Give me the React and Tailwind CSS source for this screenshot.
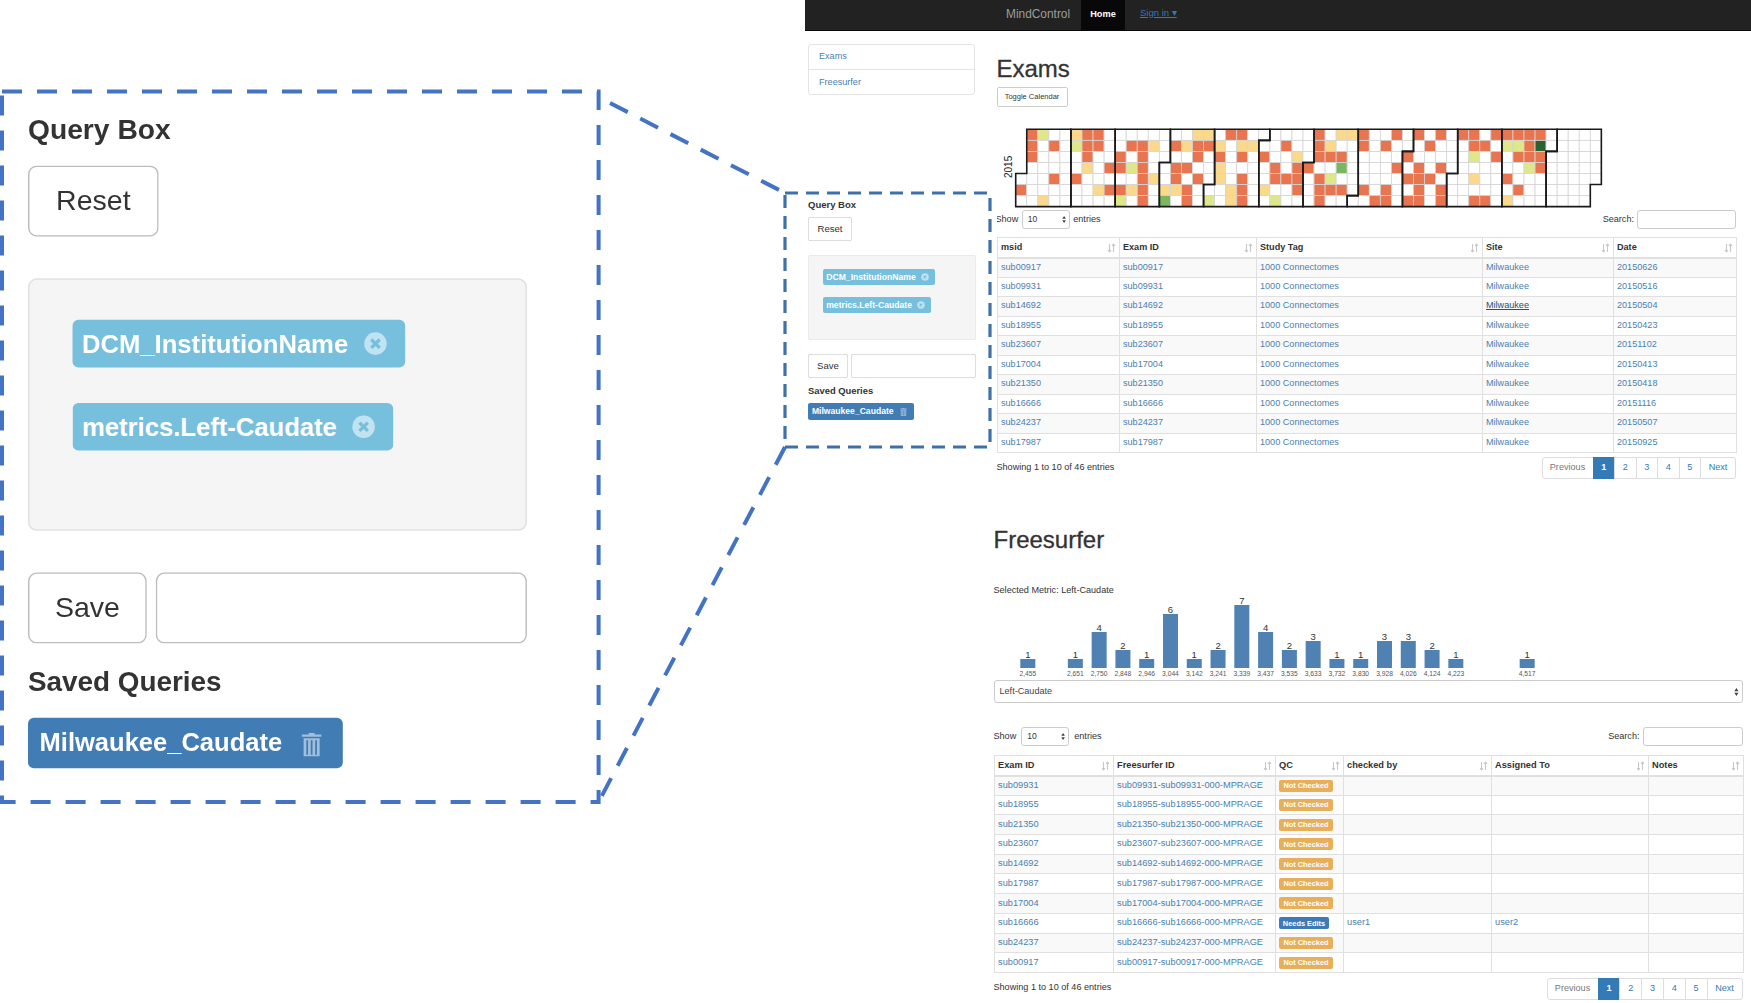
import React from 'react';

const FONT = "font-['Liberation_Sans',Arial,sans-serif]";

const examRows = [
  ['sub00917', '20150626'],
  ['sub09931', '20150516'],
  ['sub14692', '20150504'],
  ['sub18955', '20150423'],
  ['sub23607', '20151102'],
  ['sub17004', '20150413'],
  ['sub21350', '20150418'],
  ['sub16666', '20151116'],
  ['sub24237', '20150507'],
  ['sub17987', '20150925'],
];

const fsRows = ['sub09931', 'sub18955', 'sub21350', 'sub23607', 'sub14692', 'sub17987', 'sub17004', 'sub16666', 'sub24237', 'sub00917'];

// one string per week, one letter per weekday
const weeks = [
  '.....o.', 'ooo....', 'l.....y', '.o..o..', '.......', 'yl..o..', 'oooy...', 'oo...y.',
  '...o.o.', '..oo.ol', '.o.l.y.', '.oooooo', '.y..y..', '.....yg', '.o.ooy.', '.y.o.oo',
  'yoo.o..', 'yo....l', '.yoyy..', 'o....yy', 'oyo.ooo', '.y.....', '..o..y.', '...oo.l',
  '.o..o..', '..yooo.', '...o...', 'ooo.ooo', '.yo.lo.', 'y.og.o.', 'y......', 'oo...o.',
  '......o', '.o...oo', 'o..o...', '..o.o.o', 'o..oooo', '.o..o..', 'o..o.oo', '.......',
  'o......', 'ool.y.o', '.o....o', 'o.o....', 'ol..o.y', 'olo..o.', 'oool...', 'odoo...',
];

const cellColors = { o: '#e8754f', y: '#fbd98c', l: '#dfe78b', g: '#7bb661', d: '#2a6132' };

const bars = [
  [0, 1, '2,455'], [2, 1, '2,651'], [3, 4, '2,750'], [4, 2, '2,848'], [5, 1, '2,946'], [6, 6, '3,044'],
  [7, 1, '3,142'], [8, 2, '3,241'], [9, 7, '3,339'], [10, 4, '3,437'], [11, 2, '3,535'], [12, 3, '3,633'],
  [13, 1, '3,732'], [14, 1, '3,830'], [15, 3, '3,928'], [16, 3, '4,026'], [17, 2, '4,124'], [18, 1, '4,223'],
  [21, 1, '4,517'],
];

function SortIcon() {
  return (
    <svg width="9" height="10" viewBox="0 0 9 10" fill="none" stroke="#c8c8c8" strokeWidth="1.1" className="shrink-0">
      <path d="M2.5 1v8M1 7.2 2.5 9 4 7.2M6.5 9V1M5 2.8 6.5 1 8 2.8" />
    </svg>
  );
}

function UpDown({ size = 8 }) {
  return (
    <svg width={size * 0.6} height={size} viewBox="0 0 6 10" fill="#444" className="shrink-0">
      <path d="M3 0 5.6 4H.4zM3 10 .4 6h5.2z" />
    </svg>
  );
}

function CloseDot() {
  return (
    <svg width="8" height="8" viewBox="0 0 8 8" className="shrink-0">
      <circle cx="4" cy="4" r="3.8" fill="#fff" fillOpacity="0.55" />
      <path d="M2.6 2.6l2.8 2.8M5.4 2.6 2.6 5.4" stroke="#76bfdd" strokeWidth="1.1" />
    </svg>
  );
}

function TrashIcon() {
  return (
    <svg width="7" height="8" viewBox="0 0 7 8" fill="#fff" fillOpacity="0.5" className="shrink-0">
      <path d="M2.5 0h2v.6h2.3v.8H.2V.6h2.3z" />
      <path d="M.8 1.9h5.4V8H.8zM1.7 2.5v4.9h.6V2.5zM3.2 2.5v4.9h.6V2.5zM4.7 2.5v4.9h.6V2.5z" fillRule="evenodd" />
    </svg>
  );
}

function Chip({ label }) {
  return (
    <div className="flex h-[16px] w-fit items-center gap-[5px] rounded-[2px] bg-[#76bfdd] pl-[3.2px] pr-[6px] text-[8.65px] font-bold text-white">
      <span className="pt-[1px]">{label}</span>
      <CloseDot />
    </div>
  );
}

function QueryBox() {
  return (
    <div className="flex w-[168px] flex-col items-start text-[#333]">
      <div className="pt-[0.7px] text-[9.5px] font-bold leading-[12px]">Query Box</div>
      <button className="mt-[6px] h-[24px] w-[44px] rounded-[3px] bg-white pt-[0.7px] text-[9.6px] shadow-[inset_0_0_0_0.5px_#bdbdbd]">Reset</button>
      <div className="mt-[14.3px] flex h-[85.4px] w-[168px] flex-col gap-[12px] rounded-[3px] bg-[#f5f5f5] pl-[15px] pt-[14px] shadow-[inset_0_0_0_0.5px_#e0e0e0]">
        <Chip label="DCM_InstitutionName" />
        <Chip label="metrics.Left-Caudate" />
      </div>
      <div className="mt-[14px] flex w-[168px] gap-[3px]">
        <button className="h-[24px] w-[40px] rounded-[3px] bg-white text-[9.6px] shadow-[inset_0_0_0_0.5px_#bdbdbd]">Save</button>
        <div className="h-[24px] w-[125px] rounded-[3px] bg-white shadow-[inset_0_0_0_0.5px_#bdbdbd]" />
      </div>
      <div className="mt-[7px] text-[9.4px] font-bold leading-[12px]">Saved Queries</div>
      <div className="ml-[0.4px] mt-[6px] flex h-[17px] w-[106px] items-center gap-[6.5px] rounded-[2px] bg-[#427cb5] pl-[3.5px] text-[8.6px] font-bold text-white">
        <span>Milwaukee_Caudate</span>
        <TrashIcon />
      </div>
    </div>
  );
}

function Calendar() {
  const s = 11.05;
  const x0 = 18.7;
  const y0 = 1.3;
  const firstDow = new Date(2015, 0, 1).getDay();
  const cells = [];
  for (let i = 0; i < 365; i++) {
    const index = i + firstDow;
    const c = Math.floor(index / 7);
    const r = index % 7;
    const kind = weeks[c] ? weeks[c][r] : '.';
    cells.push(
      <rect key={i} x={x0 + c * s} y={y0 + r * s} width={s} height={s} fill={cellColors[kind] || '#fff'} stroke="#d4d4d4" strokeWidth="0.8" />
    );
  }
  const months = [];
  for (let m = 0; m < 12; m++) {
    const start = new Date(2015, m, 1);
    const end = new Date(2015, m + 1, 0);
    const dayOfYear = (d) => Math.round((d - new Date(2015, 0, 1)) / 86400000);
    const d0 = start.getDay();
    const w0 = Math.floor((dayOfYear(start) + firstDow) / 7);
    const d1 = end.getDay();
    const w1 = Math.floor((dayOfYear(end) + firstDow) / 7);
    months.push(
      <path
        key={m}
        d={`M${(w0 + 1) * s},${d0 * s}H${w0 * s}V${7 * s}H${w1 * s}V${(d1 + 1) * s}H${(w1 + 1) * s}V0H${(w0 + 1) * s}Z`}
        transform={`translate(${x0} ${y0})`}
        fill="none"
        stroke="#1a1a1a"
        strokeWidth="1.6"
      />
    );
  }
  return (
    <svg width="610" height="80" className="mt-[21px] block">
      {cells}
      {months}
      <text transform="translate(15 50) rotate(-90)" fontSize="10" fill="#222" fontFamily="Liberation Sans">2015</text>
    </svg>
  );
}

function Histogram() {
  const x0 = 33.8;
  const dx = 23.78;
  const base = 72;
  return (
    <svg width="749" height="84" className="block">
      {bars.map(([i, n, label]) => {
        const cx = x0 + i * dx;
        const h = n * 9;
        return (
          <g key={label}>
            <rect x={cx - 7.5} y={base - h} width="15" height={h} fill="#4f81b3" />
            <text x={cx} y={base - h - 1.5} textAnchor="middle" fontSize="9.5" fill="#333" fontFamily="Liberation Sans">{n}</text>
            <text x={cx} y={base + 8} textAnchor="middle" fontSize="6.7" fill="#555" fontFamily="Liberation Sans">{label}</text>
          </g>
        );
      })}
    </svg>
  );
}

function TableControls({ selectClass, searchClass, showClass }) {
  return (
    <div className="flex items-center justify-between text-[9.1px] text-[#333]">
      <div className={`flex items-center ${showClass}`}>
        <span>Show</span>
        <div className={`flex h-[19px] items-center justify-between rounded-[3px] border border-[#ccc] bg-white pl-[5px] pr-[3px] text-[8.5px] ${selectClass}`}>
          <span>10</span>
          <UpDown size={7} />
        </div>
        <span>entries</span>
      </div>
      <div className="flex items-center gap-[3px]">
        <span>Search:</span>
        <div className={`h-[19px] rounded-[3px] border border-[#ccc] bg-white ${searchClass}`} />
      </div>
    </div>
  );
}

function Pagination({ cellClass }) {
  const pages = ['1', '2', '3', '4', '5'];
  return (
    <div className="flex h-[22px] rounded-[3px] text-[9.1px] text-[#337ab7]">
      <div className="flex w-[52px] items-center justify-center rounded-l-[3px] border border-[#ddd] bg-white text-[#777]">Previous</div>
      {pages.map((p) => (
        <div
          key={p}
          className={`-ml-px flex items-center justify-center border ${cellClass} ${p === '1' ? 'border-[#337ab7] bg-[#337ab7] font-bold text-white' : 'border-[#ddd] bg-white'}`}
        >
          {p}
        </div>
      ))}
      <div className="-ml-px flex w-[36px] items-center justify-center rounded-r-[3px] border border-[#ddd] bg-white">Next</div>
    </div>
  );
}

function Th({ label, width }) {
  return (
    <th className={`h-[20px] border border-b-2 border-[#e0e0e0] bg-white p-0 text-left font-bold text-[#333] ${width}`}>
      <div className="flex items-center justify-between pl-[3.5px] pr-[3px] pt-[1px]">
        <span>{label}</span>
        <SortIcon />
      </div>
    </th>
  );
}

function ExamsTable() {
  return (
    <table className="mt-[8px] w-[739px] table-fixed border-collapse text-[9.1px]">
      <thead>
        <tr>
          <Th label="msid" width="w-[122px]" />
          <Th label="Exam ID" width="w-[137px]" />
          <Th label="Study Tag" width="w-[226px]" />
          <Th label="Site" width="w-[131px]" />
          <Th label="Date" width="w-[123px]" />
        </tr>
      </thead>
      <tbody>
        {examRows.map(([id, date], i) => (
          <tr key={id} className={`h-[19.5px] text-[#4b7fb0] ${i % 2 === 0 ? 'bg-[#f9f9f9]' : 'bg-white'}`}>
            <td className="border border-[#e0e0e0] p-0 pl-[3.5px]">{id}</td>
            <td className="border border-[#e0e0e0] p-0 pl-[3.5px]">{id}</td>
            <td className="border border-[#e0e0e0] p-0 pl-[3.5px]">1000 Connectomes</td>
            <td className={`border border-[#e0e0e0] p-0 pl-[3.5px] ${i === 2 ? 'text-[#23527c] underline' : ''}`}>Milwaukee</td>
            <td className="border border-[#e0e0e0] p-0 pl-[3.5px]">{date}</td>
          </tr>
        ))}
      </tbody>
    </table>
  );
}

function FreesurferTable() {
  return (
    <table className="mt-[9px] w-[749px] table-fixed border-collapse text-[9.25px]">
      <thead>
        <tr>
          <Th label="Exam ID" width="w-[119px]" />
          <Th label="Freesurfer ID" width="w-[162px]" />
          <Th label="QC" width="w-[68px]" />
          <Th label="checked by" width="w-[148px]" />
          <Th label="Assigned To" width="w-[157px]" />
          <Th label="Notes" width="w-[95px]" />
        </tr>
      </thead>
      <tbody>
        {fsRows.map((id, i) => {
          const edits = id === 'sub16666';
          return (
            <tr key={id} className={`h-[19.7px] text-[#4b7fb0] ${i % 2 === 0 ? 'bg-[#f9f9f9]' : 'bg-white'}`}>
              <td className="border border-[#e0e0e0] p-0 pl-[3.5px]">{id}</td>
              <td className="border border-[#e0e0e0] p-0 pl-[3.5px]">{`${id}-${id}-000-MPRAGE`}</td>
              <td className="border border-[#e0e0e0] p-0 pl-[3.5px]">
                <span className={`flex h-[12px] items-center justify-center rounded-[2px] text-[7.4px] font-bold text-white ${edits ? 'w-[50px] bg-[#3c7ab8]' : 'w-[54px] bg-[#e8ae5a]'}`}>
                  {edits ? 'Needs Edits' : 'Not Checked'}
                </span>
              </td>
              <td className="border border-[#e0e0e0] p-0 pl-[3.5px]">{edits ? 'user1' : ''}</td>
              <td className="border border-[#e0e0e0] p-0 pl-[3.5px]">{edits ? 'user2' : ''}</td>
              <td className="border border-[#e0e0e0] p-0" />
            </tr>
          );
        })}
      </tbody>
    </table>
  );
}

export default function App() {
  return (
    <div className={`relative h-[1003px] w-[1751px] overflow-hidden bg-white ${FONT}`}>
      <div className="ml-[805px] flex w-[946px] flex-col">
        <nav className="flex h-[31px] items-stretch border-b border-[#080808] bg-[#222] pl-[201px]">
          <div className="flex w-[75px] items-center text-[11.9px] text-[#9d9d9d]">MindControl</div>
          <div className="flex w-[44px] items-center justify-center bg-[#080808] text-[9.2px] font-bold text-white">Home</div>
          <div className="ml-[15px] pt-[6px] text-[9.5px] text-[#337ab7] underline">Sign in ▾</div>
        </nav>

        <div className="flex items-start">
          <aside className="ml-[3px] mt-[13px] w-[167px] rounded-[3px] border border-[#e4e4e4] text-[9.1px] text-[#4b7fb0]">
            <div className="flex h-[24.5px] items-center border-b border-[#e4e4e4] pl-[10px] pt-[1px]">Exams</div>
            <div className="flex h-[24.5px] items-center pl-[10px] pt-[2px]">Freesurfer</div>
          </aside>

          <main className="flex flex-col">
            <section className="ml-[21.5px] flex w-[739.5px] flex-col items-stretch">
              <h2 className="mt-[24px] text-[24px] leading-[28px] text-[#333] [-webkit-text-stroke:0.3px_#333]">Exams</h2>
              <button className="mt-[4px] h-[20px] w-[71px] rounded-[2px] border border-[#ccc] bg-white text-[7.5px] text-[#333]">Toggle Calendar</button>
              <Calendar />
              <div className="mt-[2px]">
                <TableControls selectClass="mx-[3.5px] w-[48px]" searchClass="w-[99px]" showClass="-ml-[1px]" />
              </div>
              <ExamsTable />
              <div className="mt-[4px] flex items-center justify-between text-[9.1px] text-[#333]">
                <span>Showing 1 to 10 of 46 entries</span>
                <Pagination cellClass="w-[22.5px]" />
              </div>
            </section>

            <section className="ml-[18.5px] flex w-[749px] flex-col">
              <h2 className="mt-[47px] text-[24px] leading-[28px] text-[#333] [-webkit-text-stroke:0.3px_#333]">Freesurfer</h2>
              <div className="mt-[30px] text-[9.1px] leading-[12px] text-[#333]">Selected Metric: Left-Caudate</div>
              <Histogram />
              <div className="flex h-[23px] items-center justify-between rounded-[3px] border border-[#ccc] bg-white pl-[5px] pr-[3px] text-[9.1px] text-[#444]">
                <span>Left-Caudate</span>
                <UpDown size={8} />
              </div>
              <div className="mt-[24px]">
                <TableControls selectClass="mx-[5px] w-[48px]" searchClass="w-[100px]" showClass="" />
              </div>
              <FreesurferTable />
              <div className="mt-[5px] flex items-center justify-between text-[9.1px] text-[#333]">
                <span className="mb-[3px]">Showing 1 to 10 of 46 entries</span>
                <Pagination cellClass="w-[22.8px]" />
              </div>
            </section>
          </main>
        </div>
      </div>

      {/* small callout over the page */}
      <div className="absolute left-[785px] top-[193px] h-[254px] w-[212px] bg-white" />
      <div className="absolute left-[808px] top-[198px]">
        <QueryBox />
      </div>

      {/* enlarged copy on the left */}
      <div className="absolute left-[27.5px] top-[109px] origin-top-left scale-[2.97]">
        <QueryBox />
      </div>

      <svg width="1751" height="1003" className="pointer-events-none absolute left-0 top-0" fill="none">
        <path d="M2 91.6H598.6V802H2Z" stroke="#4472c4" strokeWidth="4" strokeDasharray="20 15" />
        <path d="M610 103 785 193" stroke="#4472c4" strokeWidth="4" strokeDasharray="20 14" />
        <path d="M785 447 598.6 802" stroke="#4472c4" strokeWidth="4" strokeDasharray="20 14" />
        <path d="M785 193H990V447H785Z" stroke="#3f70a8" strokeWidth="3.2" strokeDasharray="13 8" />
      </svg>
    </div>
  );
}
